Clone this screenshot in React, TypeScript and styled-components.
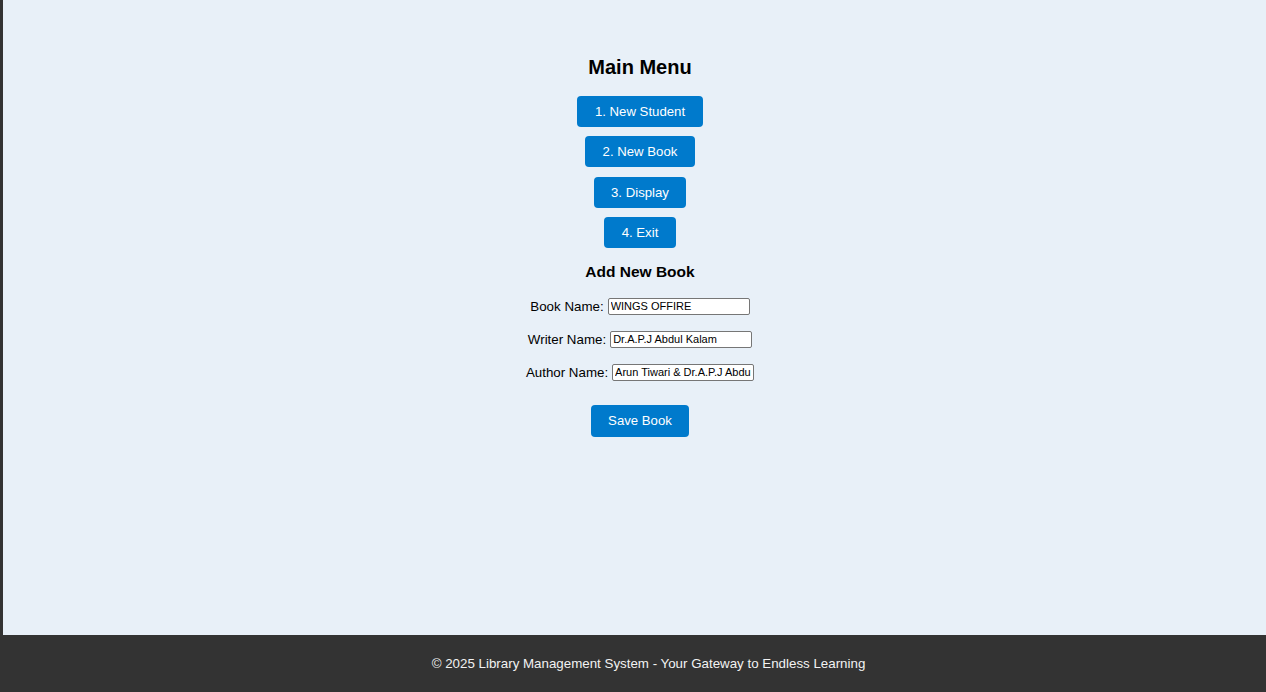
import React, { useState } from 'react';
import styled, { createGlobalStyle } from 'styled-components';

const GlobalStyle = createGlobalStyle`
  html, body {
    margin: 0;
    padding: 0;
    height: 100%;
  }
  body {
    font-family: "Liberation Sans", Arial, sans-serif;
    background-color: #333;
  }
  #root {
    min-height: 100%;
  }
`;

const Page = styled.div`
  min-height: 100vh;
  display: flex;
  flex-direction: column;
  background-color: #333;
`;

const Main = styled.main`
  flex: 1;
  margin-left: 3px;
  padding: 56px 0 0 11px;
  background-color: #e8f0f8;
  display: flex;
  flex-direction: column;
  align-items: center;
`;

const Title = styled.h2`
  margin: 0 0 17px;
  font-size: 20px;
  line-height: 23px;
  font-weight: bold;
  color: #000;
`;

const Menu = styled.nav`
  display: flex;
  flex-direction: column;
  align-items: center;
  gap: 9.33px;
`;

const Button = styled.button<{ $tall?: boolean }>`
  border: none;
  border-radius: 4px;
  background-color: #007acc;
  color: #fff;
  font-family: "Liberation Sans", Arial, sans-serif;
  font-size: 13.2px;
  line-height: 15px;
  padding: ${(p) => (p.$tall ? '8.5px 17.5px' : '8px 17.5px')};
  cursor: pointer;
`;

const SubTitle = styled.h3`
  margin: 15px 0 17px;
  font-size: 15.5px;
  line-height: 18px;
  font-weight: bold;
  color: #000;
`;

const Form = styled.form`
  display: flex;
  flex-direction: column;
  align-items: center;
  gap: 16px;
`;

const Row = styled.label`
  display: flex;
  align-items: center;
  gap: 4px;
  height: 17px;
  font-size: 13.33px;
  color: #000;
`;

const Input = styled.input`
  box-sizing: border-box;
  width: 142px;
  height: 17px;
  padding: 1px 2px;
  border: 1px solid #767676;
  border-radius: 2px;
  background: #fff;
  font-family: "Liberation Sans", Arial, sans-serif;
  font-size: 11px;
  color: #000;
`;

const SaveWrap = styled.div`
  margin-top: 8px;
`;

const Footer = styled.footer`
  height: 57px;
  display: flex;
  align-items: center;
  justify-content: center;
  padding-left: 31px;
  background-color: #333;
  color: #f2f2f2;
  font-size: 13.33px;
`;

const fields = [
  { label: 'Book Name:', value: 'WINGS OFFIRE' },
  { label: 'Writer Name:', value: 'Dr.A.P.J Abdul Kalam' },
  { label: 'Author Name:', value: 'Arun Tiwari & Dr.A.P.J Abdul Kalam' },
];

export default function App() {
  const [values, setValues] = useState(fields.map((f) => f.value));

  return (
    <Page>
      <GlobalStyle />
      <Main>
        <Title>Main Menu</Title>
        <Menu>
          <Button>1. New Student</Button>
          <Button>2. New Book</Button>
          <Button>3. Display</Button>
          <Button>4. Exit</Button>
        </Menu>
        <SubTitle>Add New Book</SubTitle>
        <Form onSubmit={(e) => e.preventDefault()}>
          {fields.map((f, i) => (
            <Row key={f.label}>
              {f.label}
              <Input
                type="text"
                value={values[i]}
                onChange={(e) => {
                  const next = [...values];
                  next[i] = e.target.value;
                  setValues(next);
                }}
              />
            </Row>
          ))}
          <SaveWrap>
            <Button $tall type="submit">Save Book</Button>
          </SaveWrap>
        </Form>
      </Main>
      <Footer>© 2025 Library Management System - Your Gateway to Endless Learning</Footer>
    </Page>
  );
}
